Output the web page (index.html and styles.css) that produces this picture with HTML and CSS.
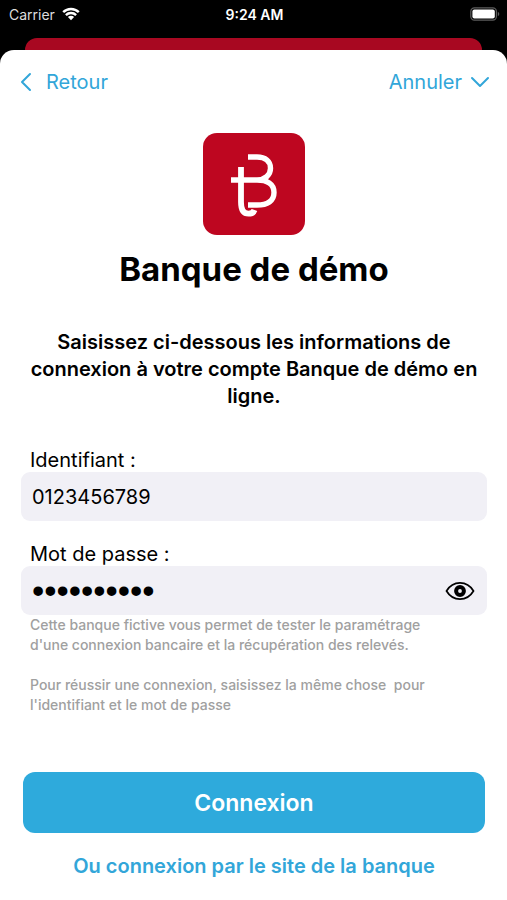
FILE: index.html
```html
<!DOCTYPE html>
<html lang="fr">
<head>
  <meta charset="utf-8">
  <meta name="viewport" content="width=device-width, initial-scale=1">
  <title>Banque de démo</title>
  <link rel="stylesheet" href="styles.css">
</head>
<body>
  <div class="status-bar">
    <div class="carrier">
      <span>Carrier</span>
      <svg class="wifi" viewBox="0 0 18 14" aria-hidden="true">
        <path d="M1.2 5.2a11 11 0 0 1 15.6 0M3.9 8.1a7.2 7.2 0 0 1 10.2 0" fill="none" stroke="#fff" stroke-width="2.4"/>
        <path d="M9 13.2 5.9 10.1a4.4 4.4 0 0 1 6.2 0Z" fill="#fff"/>
      </svg>
    </div>
    <time class="clock">9:24 AM</time>
    <svg class="battery" viewBox="0 0 30 14" aria-hidden="true">
      <rect x=".8" y=".8" width="25.6" height="12.4" rx="3.6" fill="none" stroke="#5c5c5c" stroke-width="1.2"/>
      <rect x="2.4" y="2.4" width="22.4" height="9.2" rx="2" fill="#fff"/>
      <path d="M27.8 4.8c2 .8 2 3.6 0 4.4Z" fill="#5c5c5c"/>
    </svg>
  </div>
  <div class="back-card"></div>
  <main class="sheet">
    <nav class="nav">
      <button class="nav-button" type="button">
        <svg class="chevron-left" viewBox="0 0 12 20" aria-hidden="true"><path d="M10 2 2 10l8 8"/></svg>
        <span>Retour</span>
      </button>
      <button class="nav-button" type="button">
        <span>Annuler</span>
        <svg class="chevron-down" viewBox="0 0 20 12" aria-hidden="true"><path d="m2 2 8 8 8-8"/></svg>
      </button>
    </nav>
    <header class="intro">
      <svg class="logo" viewBox="0 0 104 104" role="img" aria-label="Logo">
        <rect x="1" y="1" width="102" height="102" rx="14" fill="#be0620"/>
        <g fill="none" stroke="#fff" stroke-width="5.4">
          <path d="M46 25h9c8.5 0 13.5 4.5 13.5 11.2S63 48 55 48H29M55 48c10 0 17 4 17 12.5S65.5 73 55 73h-9"/>
          <path d="M39 35v35C39 78 41.500 81.700 46.500 81.700c3 0 5-.7 6-3.700" stroke-width="5.8"/>
        </g>
      </svg>
      <h1>Banque de démo</h1>
      <p>Saisissez ci-dessous les informations de connexion à votre compte Banque de démo en ligne.</p>
    </header>
    <form class="form">
      <div class="field">
        <label for="login">Identifiant :</label>
        <div class="input-box">
          <input id="login" type="text" value="0123456789">
        </div>
      </div>
      <div class="field">
        <label for="password">Mot de passe :</label>
        <div class="input-box">
          <input id="password" type="password" value="0123456789">
          <button class="reveal" type="button" aria-label="Afficher le mot de passe">
            <svg viewBox="0 0 30 20" aria-hidden="true">
              <path d="M1.5 10C4.5 5 9 1.9 15 1.9S25.5 5 28.5 10C25.5 15 21 18.1 15 18.1S4.5 15 1.5 10Z" fill="none" stroke="#000" stroke-width="1.7"/>
              <circle cx="15" cy="10" r="3.9" fill="none" stroke="#000" stroke-width="4"/>
            </svg>
          </button>
        </div>
      </div>
      <p class="hint">Cette banque fictive vous permet de tester le paramétrage d'une connexion bancaire et la récupération des relevés.

Pour réussir une connexion, saisissez la même chose  pour l'identifiant et le mot de passe</p>
      <button class="submit" type="submit">Connexion</button>
    </form>
    <a class="site-link" href="#">Ou connexion par le site de la banque</a>
  </main>
</body>
</html>
```
FILE: styles.css
```css
* {
  box-sizing: border-box;
}

body {
  display: flex;
  flex-direction: column;
  min-height: 100vh;
  margin: 0;
  background: #000;
  color: #000;
  font-family: Inter, "Liberation Sans", sans-serif;
}

button,
input {
  padding: 0;
  border: 0;
  background: none;
  color: inherit;
  font: inherit;
}

button {
  cursor: pointer;
}

h1,
p {
  margin: 0;
}

.status-bar {
  display: grid;
  grid-template-columns: 1fr auto 1fr;
  align-items: center;
  height: 28px;
  margin-bottom: 10px;
  padding: 0 7px;
  padding-left: 9px;
  color: #fff;
  font-size: 14px;
}

.carrier {
  display: flex;
  align-items: center;
  gap: 7px;
  color: #ddd;
}

.wifi {
  width: 18px;
  height: 14px;
}

.clock {
  font-weight: 600;
}

.battery {
  justify-self: end;
  width: 30px;
  height: 14px;
}

.back-card {
  height: 12px;
  margin: 0 25px;
  border-radius: 12px 12px 0 0;
  background: #a80821;
}

.sheet {
  display: flex;
  flex: 1;
  flex-direction: column;
  padding: 16px 20px 20px 21px;
  border-radius: 14px 14px 0 0;
  background: #fff;
}

.nav {
  display: flex;
  justify-content: space-between;
  height: 32px;
  margin: 0 -3px 0 -1px;
  color: #32a6d9;
  font-size: 20px;
}

.nav-button {
  display: flex;
  align-items: center;
  gap: 8px;
}

.nav-button path {
  fill: none;
  stroke: currentColor;
  stroke-width: 2;
  stroke-linecap: round;
  stroke-linejoin: round;
}

.chevron-left {
  width: 12px;
  height: 20px;
  margin-right: 6px;
}

.chevron-down {
  width: 20px;
  height: 12px;
}

.intro {
  display: flex;
  flex-direction: column;
  align-items: center;
  margin-top: 34px;
  text-align: center;
}

.logo {
  width: 104px;
  height: 104px;
}

h1 {
  margin-top: 13px;
  font-size: 33px;
  font-weight: 700;
  line-height: 40px;
}

.intro p {
  margin-top: 40px;
  font-size: 20px;
  font-weight: 600;
  line-height: 27px;
}

.form {
  display: flex;
  flex-direction: column;
  margin-top: 38px;
}

.field {
  display: flex;
  flex-direction: column;
  font-size: 20px;
}

.field + .field {
  margin-top: 21px;
}

.field label {
  padding: 0 9px;
  line-height: 24px;
}

.input-box {
  display: flex;
  align-items: center;
  height: 49px;
  padding: 0 12px 0 11px;
  border-radius: 9px;
  background: #f1f0f6;
}

.input-box input {
  flex: 1;
  min-width: 0;
  height: 100%;
  outline: 0;
}

.input-box input[type="password"] {
  font-family: "Liberation Sans", sans-serif;
  font-size: 35px;
}

.reveal {
  width: 30px;
  height: 20px;
}

.reveal svg {
  display: block;
  width: 30px;
  height: 20px;
}

.hint {
  padding: 0 36px 0 9px;
  color: #a0a0a0;
  font-size: 14px;
  font-weight: 500;
  line-height: 20px;
  white-space: pre-wrap;
}

.submit {
  height: 61px;
  margin: 57px 2px 0;
  border-radius: 12px;
  background: #2eaadc;
  color: #fff;
  font-size: 23px;
  font-weight: 600;
}

.site-link {
  align-self: center;
  margin-top: 20px;
  color: #32a6d9;
  font-size: 20px;
  font-weight: 600;
  line-height: 27px;
  text-decoration: none;
}
```
